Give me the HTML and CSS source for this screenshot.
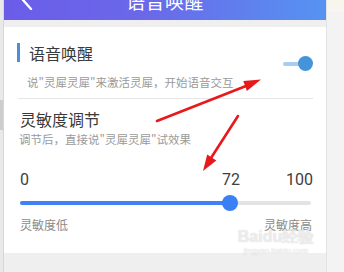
FILE: index.html
```html
<!DOCTYPE html>
<html lang="zh">
<head>
<meta charset="utf-8">
<link rel="stylesheet" href="styles.css">
</head>
<body>
<div class="screen">
  <div class="edge-left"><div class="edge-thumb"></div></div>
  <div class="main">
    <div class="header">
      <svg class="back" width="14" height="20" viewBox="0 0 14 20"><path d="M11 1 L3 10 L11 19" fill="none" stroke="#fff" stroke-width="2.4" stroke-linecap="round" stroke-linejoin="round"/></svg>
      <div class="title">语音唤醒</div>
      <div></div>
    </div>
    <div class="band"></div>
    <div class="card">
      <div class="wake-row">
        <div class="wake-text">
          <div class="sec-title"><span class="bar"></span><span>语音唤醒</span></div>
          <div class="desc desc-wake">说"灵犀灵犀"来激活灵犀，开始语音交互</div>
        </div>
        <div class="toggle"><span class="toggle-track"></span><span class="toggle-thumb"></span></div>
      </div>
      <div class="divider"></div>
      <div class="sens-title">灵敏度调节</div>
      <div class="desc desc-sens">调节后，直接说"灵犀灵犀"试效果</div>
      <div class="values">
        <span>0</span>
        <span class="value-now" style="left:72%">72</span>
        <span>100</span>
      </div>
      <div class="slider">
        <div class="slider-track"><div class="slider-fill" style="width:72%"></div></div>
        <div class="slider-thumb" style="left:72%"></div>
      </div>
      <div class="ends"><span>灵敏度低</span><span>灵敏度高</span></div>
    </div>
    <div class="bottom"></div>
  </div>
  <div class="edge-right"><div class="edge-right-top"></div></div>
  <div class="watermark"><div class="wm-big">Baidu经验</div><div class="wm-small">jingyan.baidu.com</div></div>
  <svg class="arrows" width="344" height="272" viewBox="0 0 344 272">
    <line x1="157" y1="121" x2="246" y2="86" stroke="#e8191b" stroke-width="2.6" stroke-linecap="round"/>
    <polygon points="261,79.5 246.9,91 243.3,81" fill="#e8191b"/>
    <line x1="238" y1="116" x2="211" y2="158" stroke="#e8191b" stroke-width="2.6" stroke-linecap="round"/>
    <polygon points="203,171 216.3,160.4 207.2,154.6" fill="#e8191b"/>
  </svg>
</div>
</body>
</html>
```
FILE: styles.css
```css
html, body {
  margin: 0;
  padding: 0;
  background: #f2f2f2;
}
.screen {
  position: relative;
  width: 344px;
  height: 272px;
  overflow: hidden;
  display: flex;
  font-family: "Noto Sans CJK SC", "Noto Sans", sans-serif;
}
.edge-left {
  width: 3px;
  background: #e9e9e9;
  border-right: 1px solid #d6d6d6;
  padding-top: 100px;
}
.edge-thumb {
  width: 3px;
  height: 30px;
  background: #cdcdcd;
}
.main {
  width: 322px;
  display: flex;
  flex-direction: column;
  background: #efefef;
}
.edge-right {
  flex: 1;
  background: #f3f3f3;
  border-left: 1px solid #e2e2e2;
}
.edge-right-top {
  height: 12px;
  background: #f7f5ee;
}
.header {
  height: 40px;
  margin-top: -20px;
  flex: none;
  display: grid;
  grid-template-columns: 1fr auto 1fr;
  align-items: center;
  background: linear-gradient(90deg, #6b5ce8 0%, #6a69ea 45%, #5693f1 100%);
}
.back {
  margin-left: 16px;
}
.title {
  color: #fff;
  font-size: 19px;
  line-height: 22px;
  margin-top: 2px;
  letter-spacing: 0.5px;
}
.band {
  height: 7px;
  flex: none;
}
.card {
  background: #fff;
  height: 226px;
  flex: none;
  padding: 16px 0 0 0;
  box-sizing: border-box;
}
.bottom {
  flex: 1;
}
.wake-row {
  display: flex;
  align-items: center;
  justify-content: space-between;
  padding-left: 13px;
  padding-right: 13px;
}
.sec-title {
  display: flex;
  align-items: flex-start;
  font-size: 16px;
  line-height: 20px;
  color: #3a3a3a;
}
.bar {
  width: 3px;
  height: 19px;
  background: #4a90d9;
  margin-right: 9px;
}
.desc {
  font-size: 11.5px;
  line-height: 16px;
  color: #9a9a9a;
}
.desc-wake {
  margin-top: 11px;
  margin-left: 10px;
}
.toggle {
  position: relative;
  width: 30px;
  height: 16px;
  margin-bottom: 6px;
}
.toggle-track {
  position: absolute;
  left: 0;
  top: 6px;
  width: 20px;
  height: 4px;
  border-radius: 2px;
  background: #a9cdef;
}
.toggle-thumb {
  position: absolute;
  right: 0;
  top: 0;
  width: 15px;
  height: 15px;
  border-radius: 50%;
  background: #4594da;
}
.divider {
  height: 1px;
  background: #e6e6e6;
  margin: 8px 13px 0 14px;
}
.sens-title {
  font-size: 16px;
  line-height: 20px;
  color: #3a3a3a;
  margin-top: 10px;
  margin-left: 16px;
}
.desc-sens {
  margin-top: 2px;
  margin-left: 15px;
}
.values {
  position: relative;
  display: flex;
  justify-content: space-between;
  margin: 23px 13px 0 16px;
  font-family: Roboto, "Noto Sans", sans-serif;
  font-size: 16px;
  line-height: 20px;
  color: #404040;
}
.value-now {
  position: absolute;
  top: 0;
  transform: translateX(-50%);
}
.slider {
  position: relative;
  height: 16px;
  margin: 5px 15px 0 16px;
}
.slider-track {
  position: absolute;
  left: 0;
  right: 0;
  top: 6px;
  height: 4px;
  border-radius: 2px;
  background: #e3e3e3;
}
.slider-fill {
  height: 4px;
  border-radius: 2px;
  background: #3f82f4;
}
.slider-thumb {
  position: absolute;
  top: 0;
  width: 16px;
  height: 16px;
  margin-left: -8px;
  border-radius: 50%;
  background: #3b7ff5;
}
.ends {
  display: flex;
  justify-content: space-between;
  margin: 6px 14px 0 16px;
  font-size: 12px;
  line-height: 16px;
  color: #8a8a8a;
}
.watermark {
  position: absolute;
  left: 236px;
  top: 227px;
  width: 80px;
  text-align: center;
  color: rgba(255, 255, 255, 0.6);
  text-shadow: 0 0 1px rgba(170, 170, 170, 0.6);
  font-family: "Liberation Sans", sans-serif;
}
.wm-big {
  font-size: 16px;
  font-weight: bold;
  line-height: 19px;
}
.wm-small {
  font-size: 8px;
  line-height: 9px;
}
.arrows {
  position: absolute;
  left: 0;
  top: 0;
}
```
